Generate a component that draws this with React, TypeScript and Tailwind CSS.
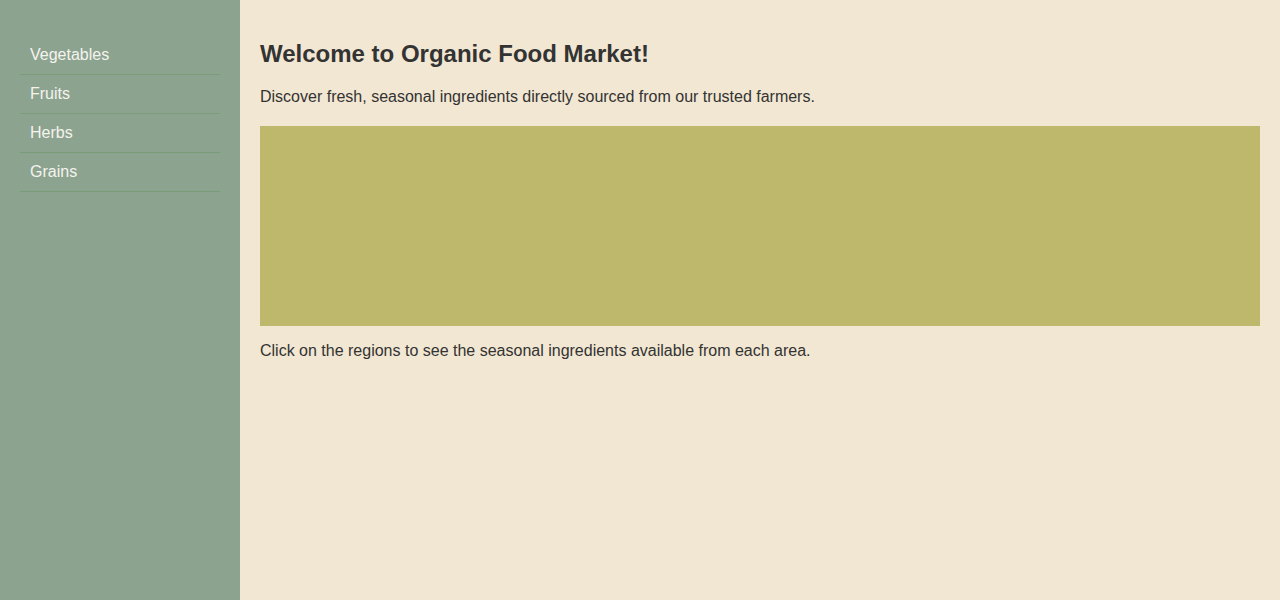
import React from "react";

const categories = ["Vegetables", "Fruits", "Herbs", "Grains"];

function Sidebar() {
  return (
    <aside className="w-[240px] shrink-0 bg-[#8ca390] px-5 pt-[36px]">
      <ul>
        {categories.map((c) => (
          <li key={c} className="border-b border-[#7a9c78]">
            <a href="#" className="block px-[10px] py-[10px] text-base leading-[18px] text-[#f5f3ee]">
              {c}
            </a>
          </li>
        ))}
      </ul>
    </aside>
  );
}

export default function App() {
  return (
    <div
      className="flex min-h-[600px] bg-[#f2e7d2] text-[#333333]"
      style={{ fontFamily: '"Liberation Sans", Arial, sans-serif' }}
    >
      <Sidebar />
      <main className="flex-1 p-5">
        <h1 className="mt-5 text-[24px] leading-[28px] font-bold">Welcome to Organic Food Market!</h1>
        <p className="mt-5 text-base leading-[18px]">
          Discover fresh, seasonal ingredients directly sourced from our trusted farmers.
        </p>
        <div className="mt-5 h-[200px] w-full bg-[#beb86c]" />
        <p className="mt-4 text-base leading-[18px]">
          Click on the regions to see the seasonal ingredients available from each area.
        </p>
      </main>
    </div>
  );
}
